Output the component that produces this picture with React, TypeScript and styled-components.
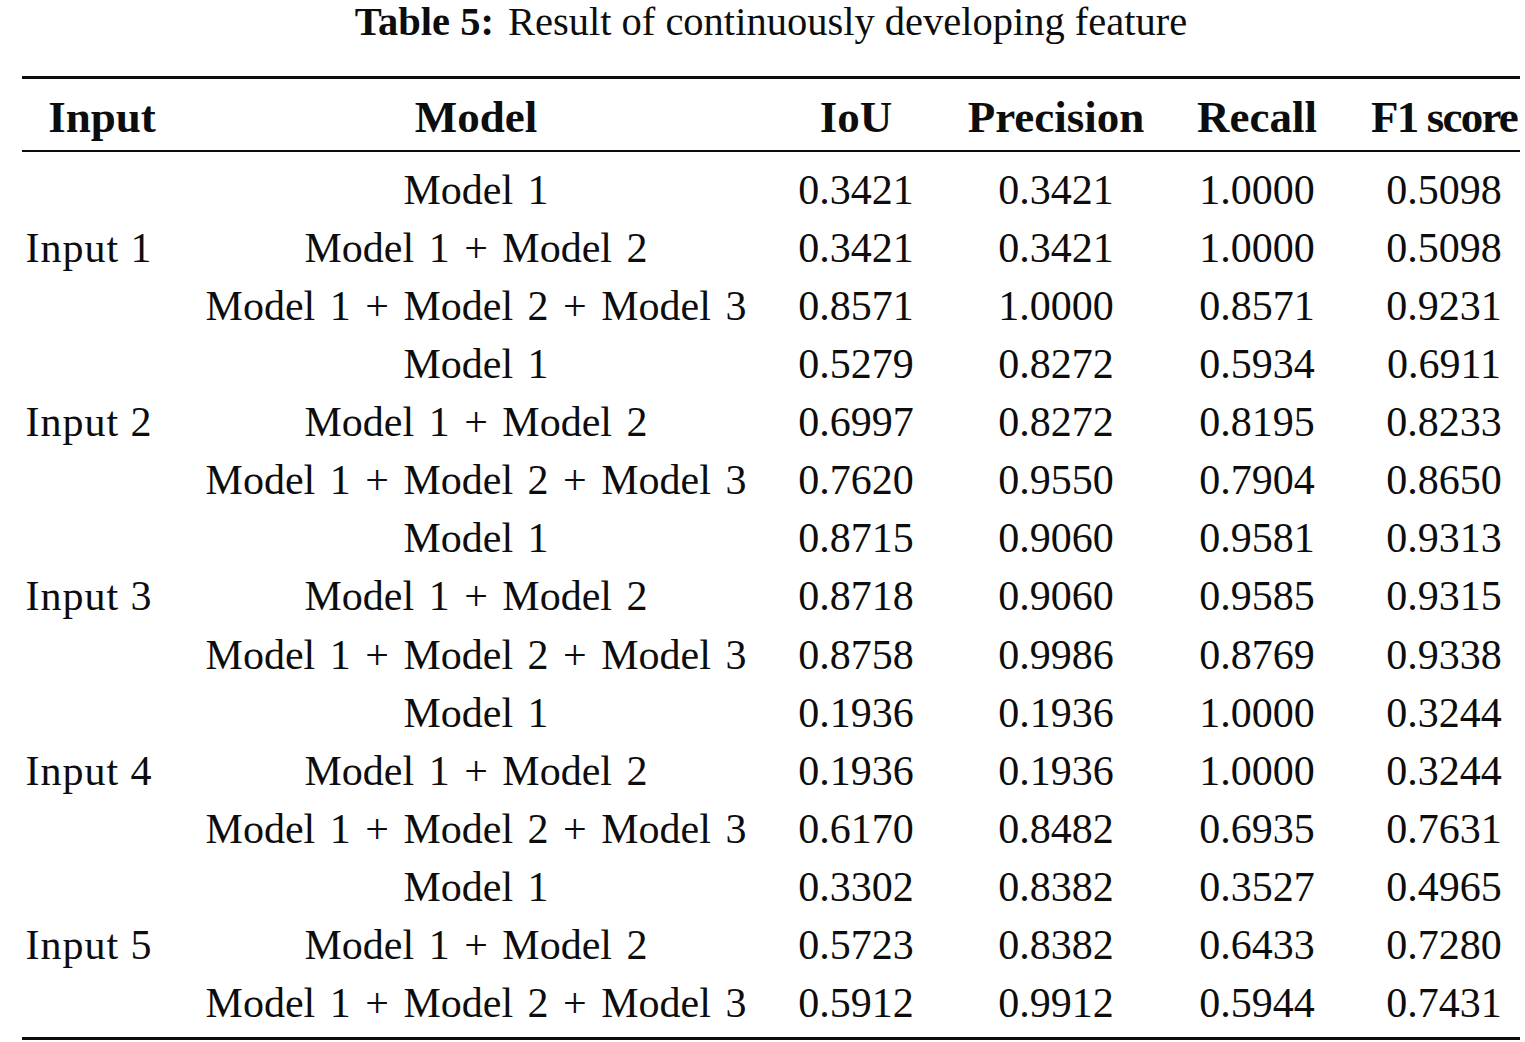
import React from "react";
import styled, { createGlobalStyle } from "styled-components";

const Global = createGlobalStyle`
  html, body { margin: 0; padding: 0; background: #fff; }
  body { font-family: "Liberation Serif", "Times New Roman", serif; color: #0d0d0d; }
`;

const Page = styled.div`
  width: 1525px;
  padding-left: 22px;
  box-sizing: border-box;
`;

const Caption = styled.div`
  width: 1498px;
  text-align: center;
  font-size: 40.5px;
  line-height: 44px;
  height: 44px;
  margin-bottom: 32px;
  white-space: nowrap;
`;

const CaptionLabel = styled.b`
  font-weight: 700;
  margin-right: 14px;
`;

const Table = styled.div`
  width: 1498px;
  border-top: 3px solid #0d0d0d;
  border-bottom: 3px solid #0d0d0d;
  padding-bottom: 5px;
`;

const cols = "160px 588px 172px 228px 174px 176px";

const HeadRow = styled.div`
  display: grid;
  grid-template-columns: ${cols};
  padding-top: 5px;
  height: 66px;
  border-bottom: 2px solid #0d0d0d;
  font-weight: 700;
  font-size: 45px;
  line-height: 66px;
`;

const Body = styled.div`
  padding-top: 9px;
`;

const Row = styled.div`
  display: grid;
  grid-template-columns: ${cols};
  font-size: 42px;
  line-height: 58.07px;
  height: 58.07px;
`;

const Cell = styled.div<{ $padL?: number; $padR?: number; $ws?: number; $ls?: number }>`
  text-align: center;
  white-space: nowrap;
  overflow: visible;
  padding-left: ${(p) => p.$padL ?? 0}px;
  padding-right: ${(p) => p.$padR ?? 0}px;
  word-spacing: ${(p) => p.$ws ?? 0}px;
  letter-spacing: ${(p) => p.$ls ?? 0}px;
`;

type R = [string, string, string, string, string];

const groups: { input: string; rows: R[] }[] = [
  {
    input: "Input 1",
    rows: [
      ["Model 1", "0.3421", "0.3421", "1.0000", "0.5098"],
      ["Model 1 + Model 2", "0.3421", "0.3421", "1.0000", "0.5098"],
      ["Model 1 + Model 2 + Model 3", "0.8571", "1.0000", "0.8571", "0.9231"],
    ],
  },
  {
    input: "Input 2",
    rows: [
      ["Model 1", "0.5279", "0.8272", "0.5934", "0.6911"],
      ["Model 1 + Model 2", "0.6997", "0.8272", "0.8195", "0.8233"],
      ["Model 1 + Model 2 + Model 3", "0.7620", "0.9550", "0.7904", "0.8650"],
    ],
  },
  {
    input: "Input 3",
    rows: [
      ["Model 1", "0.8715", "0.9060", "0.9581", "0.9313"],
      ["Model 1 + Model 2", "0.8718", "0.9060", "0.9585", "0.9315"],
      ["Model 1 + Model 2 + Model 3", "0.8758", "0.9986", "0.8769", "0.9338"],
    ],
  },
  {
    input: "Input 4",
    rows: [
      ["Model 1", "0.1936", "0.1936", "1.0000", "0.3244"],
      ["Model 1 + Model 2", "0.1936", "0.1936", "1.0000", "0.3244"],
      ["Model 1 + Model 2 + Model 3", "0.6170", "0.8482", "0.6935", "0.7631"],
    ],
  },
  {
    input: "Input 5",
    rows: [
      ["Model 1", "0.3302", "0.8382", "0.3527", "0.4965"],
      ["Model 1 + Model 2", "0.5723", "0.8382", "0.6433", "0.7280"],
      ["Model 1 + Model 2 + Model 3", "0.5912", "0.9912", "0.5944", "0.7431"],
    ],
  },
];

export default function App() {
  return (
    <Page>
      <Global />
      <Caption>
        <CaptionLabel>Table 5:</CaptionLabel>Result of continuously developing feature
      </Caption>
      <Table>
        <HeadRow>
          <Cell>Input</Cell>
          <Cell>Model</Cell>
          <Cell>IoU</Cell>
          <Cell>Precision</Cell>
          <Cell>Recall</Cell>
          <Cell $padL={24} $ls={-1.8}>F1 score</Cell>
        </HeadRow>
        <Body>
          {groups.map((g) =>
            g.rows.map((r, i) => (
              <Row key={g.input + i}>
                <Cell $padR={26} $ls={1}>{i === 1 ? g.input : ""}</Cell>
                <Cell $ws={4}>{r[0]}</Cell>
                <Cell>{r[1]}</Cell>
                <Cell>{r[2]}</Cell>
                <Cell>{r[3]}</Cell>
                <Cell $padL={24}>{r[4]}</Cell>
              </Row>
            ))
          )}
        </Body>
      </Table>
    </Page>
  );
}
